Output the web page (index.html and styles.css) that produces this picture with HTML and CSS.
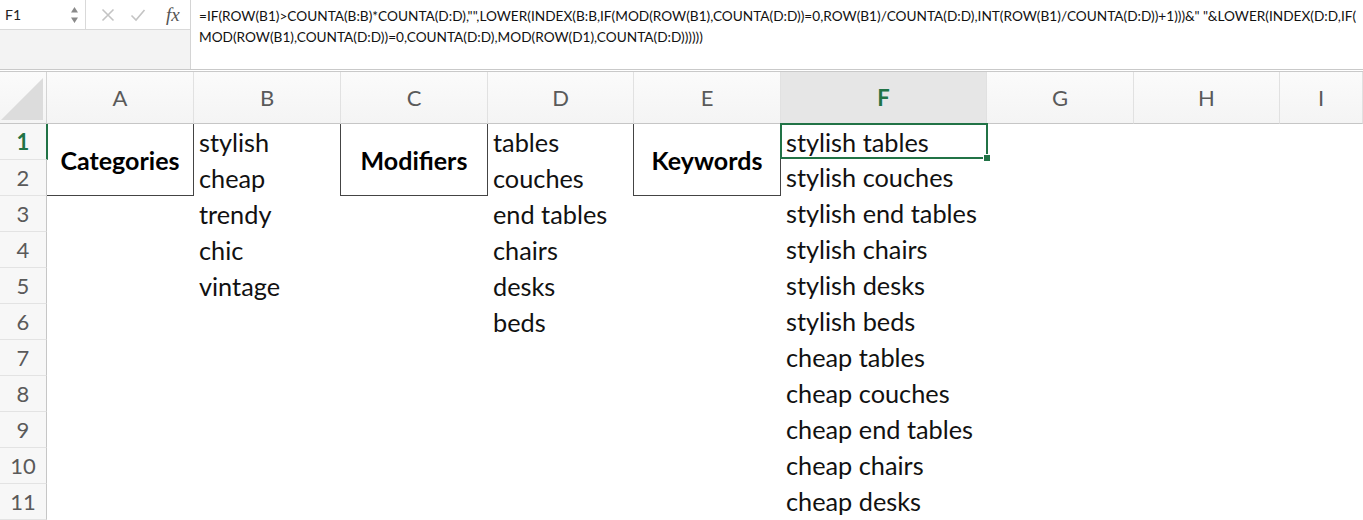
FILE: index.html
```html
<!DOCTYPE html>
<html>
<head>
    <title>Keywords - Sheet1</title>
    <link rel="stylesheet" href="styles.css">
</head>
<body>
    <div class="formula-bar">
        <div class="fb-left">
            <div class="fb-top">
                <div class="name-box">
                    <span class="cell-ref">F1</span>
                    <span class="spinner">
                        <svg width="9" height="18" viewBox="0 0 9 18"><path d="M4.5 1 L8 6.5 H1 Z M4.5 17 L8 11.5 H1 Z" fill="#8a8a8a"/></svg>
                    </span>
                </div>
                <div class="fb-icons">
                    <svg class="ic" width="14" height="14" viewBox="0 0 14 14"><path d="M1.5 1.5 L12.5 12.5 M12.5 1.5 L1.5 12.5" stroke="#c4c4c4" stroke-width="1.6" fill="none"/></svg>
                    <svg class="ic" width="16" height="14" viewBox="0 0 16 14"><path d="M1.5 7.5 L6 12 L14.5 2" stroke="#c4c4c4" stroke-width="1.6" fill="none"/></svg>
                    <span class="fx">fx</span>
                </div>
            </div>
        </div>
        <div class="formula">
            <div>=IF(ROW(B1)&gt;COUNTA(B:B)*COUNTA(D:D),"",LOWER(INDEX(B:B,IF(MOD(ROW(B1),COUNTA(D:D))=0,ROW(B1)/COUNTA(D:D),INT(ROW(B1)/COUNTA(D:D))+1)))&amp;" "&amp;LOWER(INDEX(D:D,IF(</div>
            <div>MOD(ROW(B1),COUNTA(D:D))=0,COUNTA(D:D),MOD(ROW(D1),COUNTA(D:D))))))</div>
        </div>
    </div>

    <div class="sheet">
        <div class="col rows">
            <div class="hdr corner"><span class="tri"></span></div>
            <div class="rn active">1</div>
            <div class="rn">2</div>
            <div class="rn">3</div>
            <div class="rn">4</div>
            <div class="rn">5</div>
            <div class="rn">6</div>
            <div class="rn">7</div>
            <div class="rn">8</div>
            <div class="rn">9</div>
            <div class="rn">10</div>
            <div class="rn">11</div>
        </div>
        <div class="col w147">
            <div class="hdr">A</div>
            <div class="label">Categories</div>
        </div>
        <div class="col w147">
            <div class="hdr">B</div>
            <div class="cell">stylish</div>
            <div class="cell">cheap</div>
            <div class="cell">trendy</div>
            <div class="cell">chic</div>
            <div class="cell">vintage</div>
        </div>
        <div class="col w147">
            <div class="hdr">C</div>
            <div class="label">Modifiers</div>
        </div>
        <div class="col w146">
            <div class="hdr">D</div>
            <div class="cell">tables</div>
            <div class="cell">couches</div>
            <div class="cell">end tables</div>
            <div class="cell">chairs</div>
            <div class="cell">desks</div>
            <div class="cell">beds</div>
        </div>
        <div class="col w147">
            <div class="hdr">E</div>
            <div class="label">Keywords</div>
        </div>
        <div class="col w206">
            <div class="hdr sel">F</div>
            <div class="cell selected">stylish tables<span class="handle"></span></div>
            <div class="cell">stylish couches</div>
            <div class="cell">stylish end tables</div>
            <div class="cell">stylish chairs</div>
            <div class="cell">stylish desks</div>
            <div class="cell">stylish beds</div>
            <div class="cell">cheap tables</div>
            <div class="cell">cheap couches</div>
            <div class="cell">cheap end tables</div>
            <div class="cell">cheap chairs</div>
            <div class="cell">cheap desks</div>
        </div>
        <div class="col w147">
            <div class="hdr">G</div>
        </div>
        <div class="col w146">
            <div class="hdr">H</div>
        </div>
        <div class="col grow">
            <div class="hdr">I</div>
        </div>
    </div>
</body>
</html>
```

FILE: styles.css
```css
body {
    margin: 0;
    padding: 0;
    background: #fff;
    font-family: Lato, "Open Sans", Arial, sans-serif;
    overflow: hidden;
}

/* ---- formula bar ---- */

.formula-bar {
    display: flex;
    height: 69px;
    border-bottom: 3px double #c9c9c9;
}

.fb-left {
    width: 190px;
    background: #f3f3f3;
    border-right: 1px solid #d4d4d4;
}

.fb-top {
    display: flex;
    height: 29px;
    background: #fff;
    border-bottom: 1px solid #d9d9d9;
}

.name-box {
    width: 86px;
    display: flex;
    align-items: center;
    justify-content: space-between;
    padding: 0 6px 0 5px;
    box-sizing: border-box;
    border-right: 1px solid #d9d9d9;
    font-size: 14px;
    color: #222;
}

.spinner {
    display: flex;
}

.fb-icons {
    flex: 1;
    display: flex;
    align-items: center;
    padding-left: 15px;
    gap: 15px;
}

.fx {
    margin-left: 5px;
    font-family: "Liberation Serif", serif;
    font-style: italic;
    font-size: 19px;
    color: #555;
}

.formula {
    flex: 1;
    padding: 6px 0 0 8px;
    font-size: 13.65px;
    line-height: 21px;
    color: #111;
    white-space: nowrap;
    overflow: hidden;
}

/* ---- grid ---- */

.sheet {
    display: flex;
}

.col {
    flex: none;
}

.w146 { width: 146px; }
.w147 { width: 147px; }
.w206 { width: 206px; }
.grow { flex: 1; }

.hdr {
    height: 51px;
    border-bottom: 1px solid #c6c6c6;
    border-right: 1px solid #e1e1e1;
    background: linear-gradient(#fbfbfb, #f4f4f4);
    display: flex;
    align-items: center;
    justify-content: center;
    font-size: 22px;
    color: #5a5a5a;
}

.hdr.sel {
    background: #e6e6e6;
    color: #217346;
    font-weight: bold;
}

.rows {
    width: 47px;
}

.corner {
    position: relative;
    border-right: 1px solid #d4d4d4;
}

.tri {
    position: absolute;
    right: 3px;
    bottom: 3px;
    width: 0;
    height: 0;
    border-left: 42px solid transparent;
    border-bottom: 42px solid #dcdcdc;
}

.rn {
    height: 35px;
    border-bottom: 1px solid #e3e3e3;
    border-right: 1px solid #c6c6c6;
    background: #f7f7f7;
    display: flex;
    align-items: center;
    justify-content: center;
    font-size: 22px;
    color: #5a5a5a;
}

.rn.active {
    color: #217346;
    font-weight: bold;
    border-right: 2px solid #217346;
    width: 46px;
}

.cell {
    height: 36px;
    line-height: 36px;
    padding-left: 5px;
    font-size: 25.3px;
    color: #111;
    white-space: nowrap;
}

.label {
    height: 71px;
    border-right: 1px solid #444;
    border-bottom: 1px solid #444;
    display: flex;
    align-items: center;
    justify-content: center;
    font-size: 25px;
    font-weight: bold;
    color: #000;
}

.col.w147 + .col .label,
.col.w146 + .col .label {
    border-left: 1px solid #444;
    margin-left: -1px;
}

.cell.selected {
    position: relative;
    height: 36px;
    line-height: 34px;
    margin: -1px 0 0 -1px;
    padding-left: 4px;
    border: 2px solid #217346;
    box-sizing: border-box;
    width: 208px;
}

.handle {
    position: absolute;
    right: -5px;
    bottom: -5px;
    width: 6px;
    height: 6px;
    background: #217346;
    border: 1px solid #fff;
}
```
